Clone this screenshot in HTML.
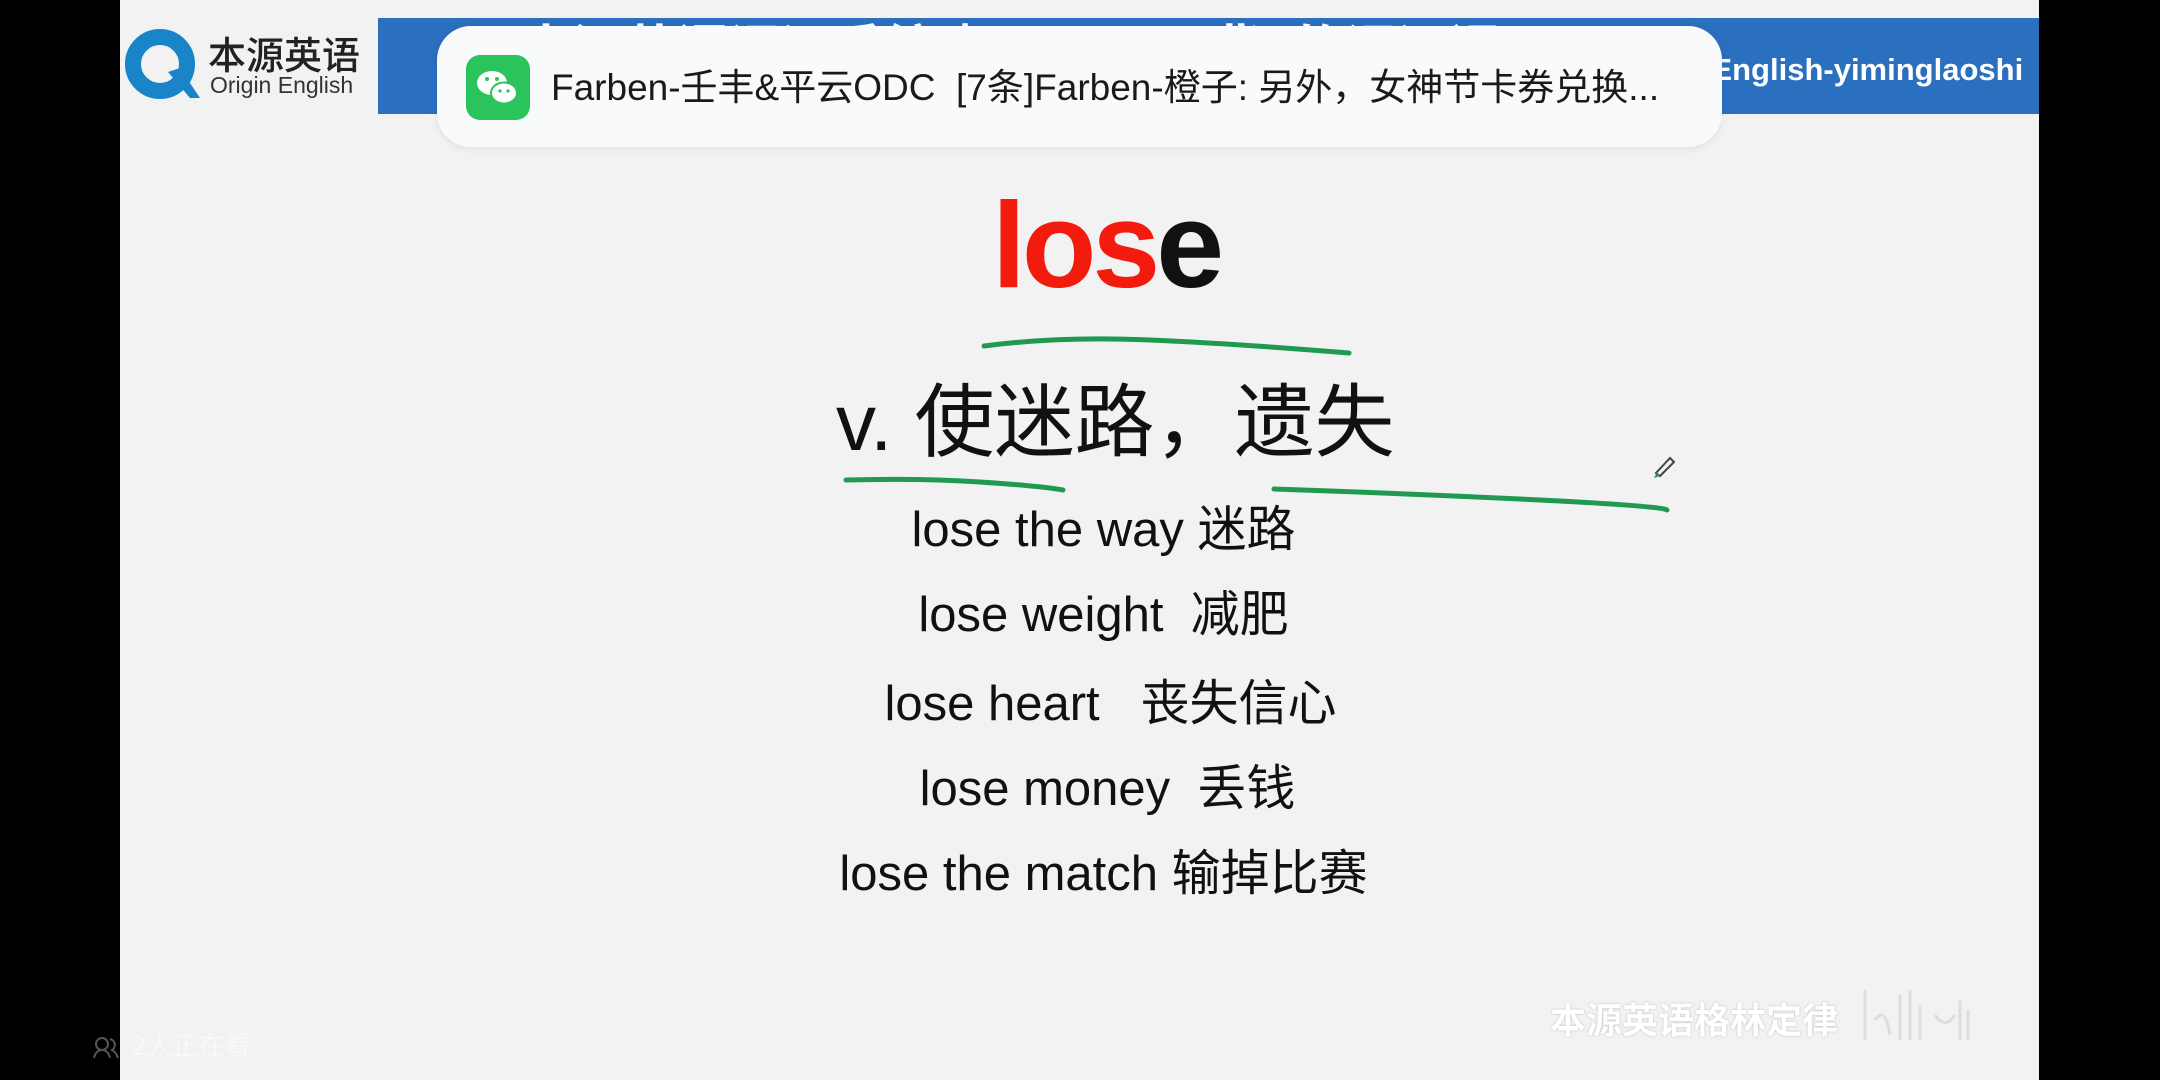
<!DOCTYPE html>
<html><head><meta charset="utf-8"><style>
*{margin:0;padding:0;box-sizing:border-box}
body{width:2160px;height:1080px;background:#000;position:relative;overflow:hidden;font-family:"Liberation Sans","Noto Sans CJK SC",sans-serif}
#c{position:absolute;left:120px;top:0;width:1919px;height:1080px;background:#f2f2f2;overflow:hidden}
.a{position:absolute;white-space:pre}
.l{position:absolute;left:0;width:1919px;text-align:center;font-size:49px;color:#111;white-space:pre;line-height:1}
</style></head><body>
<div id="c">
 <svg class="a" style="left:4px;top:28px" width="76" height="74" viewBox="0 0 76 74">
  <circle cx="36" cy="36" r="27" fill="none" stroke="#1a84c8" stroke-width="16"/>
  <path d="M44 44 L66 70 L76 70 L56 40 Z" fill="#1a84c8"/>
 </svg>
 <div class="a" style="left:88px;top:34px;font-size:38px;color:#222;font-family:'Noto Sans CJK SC',sans-serif;font-weight:500;line-height:1">本源英语</div>
 <div class="a" style="left:90px;top:74px;font-size:23px;color:#333;line-height:1">Origin English</div>
 <div class="a" style="left:258px;top:18px;width:1661px;height:96px;background:#2b6fbf"></div>
 <div class="a" style="left:400px;top:20px;font-size:52px;color:#fff;font-weight:bold;font-family:'Noto Sans CJK SC',sans-serif;line-height:1">本源英语词汇系统班——不用"背"的词汇课</div>
 <div class="a" style="left:1538px;top:54px;font-size:31px;color:#fff;font-weight:bold;line-height:1"><span style="opacity:.5">vx:</span> English-yiminglaoshi</div>

 <div class="a" style="left:872px;top:184px;font-size:122px;font-weight:bold;line-height:1;letter-spacing:-4px"><span style="color:#f21b0e">los</span><span style="color:#111">e</span></div>

 <div class="a" style="left:716px;top:383px;font-size:80px;color:#111;line-height:1;font-family:'Liberation Sans','Noto Sans CJK SC',sans-serif">v. 使迷路，遗失</div>

 <svg class="a" style="left:0;top:0" width="1919" height="1080">
  <g fill="none" stroke="#1f9a50" stroke-width="5" stroke-linecap="round">
   <path d="M864 346 Q940 336 1030 340 T1229 353"/>
   <path d="M726 480 Q800 478 860 482 T943 490"/>
   <path d="M1154 489 Q1300 494 1420 500 T1547 510"/>
  </g>
  <path d="M1536 473 L1550 458 L1554 462 L1540 476 Z" fill="none" stroke="#444" stroke-width="2"/>
  <path d="M1534 478 L1537 472 L1540 476 Z" fill="#1f9a50"/>
 </svg>

 <div class="l" style="top:506px;left:24px">lose the way 迷路</div>
 <div class="l" style="top:591px;left:24px">lose weight  减肥</div>
 <div class="l" style="top:680px;left:31px">lose heart   丧失信心</div>
 <div class="l" style="top:765px;left:28px">lose money  丢钱</div>
 <div class="l" style="top:850px;left:24px">lose the match 输掉比赛</div>

 <div class="a" style="left:1430px;top:1000px;font-size:36px;color:#fff;font-weight:bold;font-family:'Noto Sans CJK SC',sans-serif;text-shadow:0 0 2px #bbb;line-height:1">本源英语格林定律</div>
 <svg class="a" style="left:1740px;top:985px" width="115" height="60"><g stroke="#ddd" stroke-width="3" fill="none"><path d="M5 5V55M15 35Q25 20 30 50M40 10V55M50 5V55M60 20V55M75 30Q85 45 95 30M100 15V55M108 25V55"/></g></svg>
 <div class="a" style="left:12px;top:1032px;font-size:26px;color:#f8f8f8;font-family:'Noto Sans CJK SC',sans-serif;line-height:1">2人正在看</div>
</div>
<svg class="a" style="left:92px;top:1036px" width="28" height="24"><g fill="none" stroke="#555" stroke-width="2"><circle cx="10" cy="8" r="6"/><path d="M2 22Q4 14 10 14Q16 14 18 22M18 3A6 6 0 0 1 20 14Q24 16 26 22"/></g></svg>

<div class="a" style="left:437px;top:26px;width:1285px;height:121px;background:#f9fafc;border-radius:34px;box-shadow:0 2px 8px rgba(0,0,0,.08)"></div>
<div class="a" style="left:466px;top:55px;width:64px;height:65px;background:#2bc35c;border-radius:14px"></div>
<svg class="a" style="left:466px;top:55px" width="64" height="65" viewBox="0 0 64 65">
 <ellipse cx="26" cy="28" rx="15" ry="12" fill="#fff"/>
 <ellipse cx="38" cy="38" rx="13" ry="10.5" fill="#fff" stroke="#2bc35c" stroke-width="2"/>
 <circle cx="21" cy="24" r="2" fill="#2bc35c"/><circle cx="31" cy="24" r="2" fill="#2bc35c"/>
 <circle cx="34" cy="36" r="1.6" fill="#2bc35c"/><circle cx="42" cy="36" r="1.6" fill="#2bc35c"/>
</svg>
<div class="a" style="left:551px;top:69px;font-size:37px;color:#1a1a1a;line-height:1;font-family:'Liberation Sans','Noto Sans CJK SC',sans-serif">Farben-壬丰&amp;平云ODC  [7条]Farben-橙子: 另外，女神节卡券兑换...</div>
</body></html>
